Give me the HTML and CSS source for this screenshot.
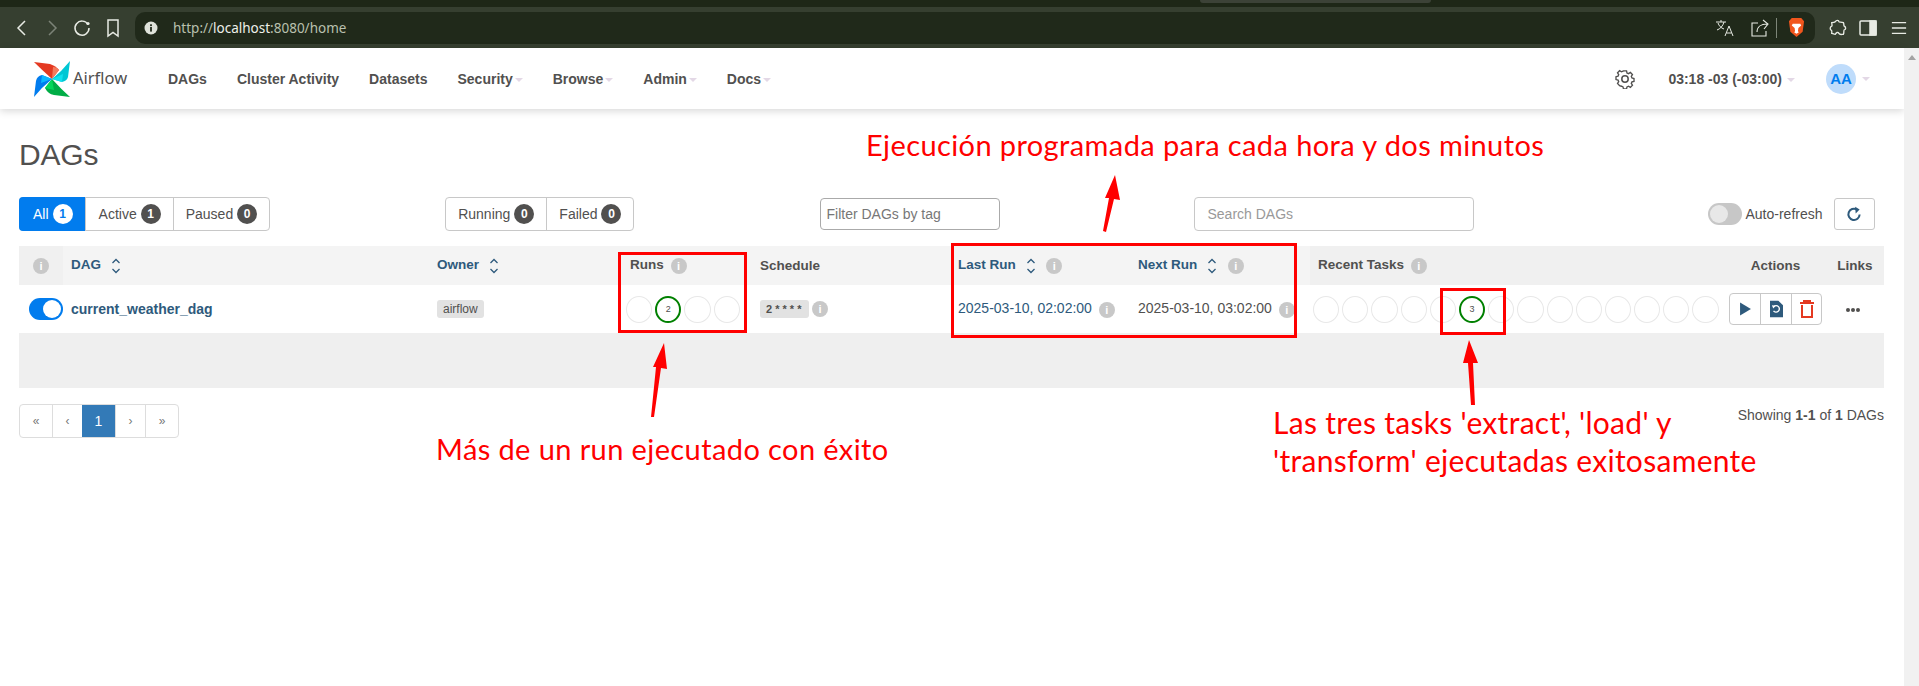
FILE: index.html
```html
<!DOCTYPE html>
<html lang="es">
<head>
    <meta charset="UTF-8">
    <title>DAGs - Airflow</title>
    <link rel="stylesheet" href="styles.css">
</head>
<body>
    <div class="tabstrip"><div class="tab-edge"></div></div>
    <div class="toolbar">
        <svg class="chrome-icon ic-back" viewBox="0 0 16 20"><path d="M11 3 4 10l7 7"/></svg>
        <svg class="chrome-icon ic-forward" viewBox="0 0 16 20"><path d="m5 3 7 7-7 7"/></svg>
        <svg class="chrome-icon ic-reload" viewBox="0 0 20 20"><path d="M16 6.500A7 7 0 1 0 17 10"/><circle cx="16" cy="5.500" r="1.600" fill="#e8ebe4" stroke="none"/></svg>
        <svg class="chrome-icon ic-bookmark" viewBox="0 0 16 20"><path d="M3 2h10v16l-5-3.500L3 18z"/></svg>
        <div class="urlbar">
            <svg class="url-info" viewBox="0 0 14 14"><circle cx="7" cy="7" r="6.500" fill="#dfe2da"/><rect x="6.100" y="6" width="1.800" height="4.600" fill="#20291a"/><rect x="6.100" y="3.300" width="1.800" height="1.800" fill="#20291a"/></svg>
            <span class="url-text">http://<b>localhost</b>:8080/home</span>
            <svg class="chrome-icon ic-translate" viewBox="0 0 20 20"><path d="M1 4h10M6 2v2M9 4c-1 4-4 7-7 8M3 5c1 3 3 5 6 6M10 18l4-10 4 10M11.500 15h5" stroke-width="1"/></svg>
            <svg class="chrome-icon ic-share" viewBox="0 0 20 20"><path d="M8 5H2v13h14v-5M7 14c0-5 4-8 10-8M13 2l5 4-4 5" stroke-width="1.100"/></svg>
            <span class="url-sep"></span>
            <svg class="brave" viewBox="0 0 18 22"><path d="M4 1h10l3 3.500-1.500 11L9 21l-6.500-5.500L1 4.500z" fill="#f1561d"/><path d="M5 7h8l1 2-3 2.500-.5 3.500 1 1L9 17.500 6.500 16l1-1-.5-3.500L4 9z" fill="#fff"/></svg>
        </div>
        <svg class="chrome-icon ic-puzzle" viewBox="0 0 20 20"><path d="M7 3c1-2 4-2 4 0 0 1 3 0 5 1 1 2 0 3 1 4 2 1 2 4 0 4-1 0 0 3-1 5-2 0-4 1-5-1-1-2-3-1-4 1-2 0-3-1-4-1 0-2 1-3-1-4-1-1-1-3 1-4 1-1 0-2 0-4 2 0 3 0 4-1z"/></svg>
        <svg class="chrome-icon ic-sidebar" viewBox="0 0 18 18"><rect x="1" y="2" width="16" height="14" rx="1"/><rect x="11" y="2" width="6" height="14" fill="#e8ebe4"/></svg>
        <svg class="chrome-icon ic-menu" viewBox="0 0 18 18"><path d="M1 3h16M1 9h16M1 15h16"/></svg>
    </div>

    <div class="window">
        <div class="page">
            <nav class="navbar">
                <a class="brand">
                    <svg class="brand-logo" viewBox="0 0 36 36">
                        <path d="M0 1 16 3Q22 5 25 9L18 18Q8 9 0 1Z" fill="#e43921"/>
                        <path d="M18 18 19 6Q23 6 25 9Z" fill="#f37a5d"/>
                        <path d="M36 0 34 16Q33 20 28 21L18 18Q28 10 36 0Z" fill="#00c7d4"/>
                        <path d="M18 18 29 13 28 21Z" fill="#11e1ee"/>
                        <path d="M36 36 20 34Q14 33 11 27L18 18Q27 28 36 36Z" fill="#00ad46"/>
                        <path d="M18 18 20 29 11 27Z" fill="#04d659"/>
                        <path d="M0 36 2 20Q3 15 8 14L18 18Q8 26 0 36Z" fill="#017cee"/>
                        <path d="M18 18 7 22 8 14Z" fill="#0cb6ff"/>
                    </svg>
                    <span class="brand-name">Airflow</span>
                </a>
                <ul class="nav-links">
                    <li>DAGs</li>
                    <li>Cluster Activity</li>
                    <li>Datasets</li>
                    <li class="has-caret">Security</li>
                    <li class="has-caret">Browse</li>
                    <li class="has-caret">Admin</li>
                    <li class="has-caret">Docs</li>
                </ul>
                <div class="nav-right">
                    <svg class="gear" viewBox="0 0 20 20"><path d="M8.300 1.500h3.400l.5 2.400 1.700.7 2.100-1.300 2.300 2.400-1.300 2 .7 1.700 2.300.6v3.200l-2.300.6-.7 1.700 1.300 2-2.300 2.400-2.100-1.300-1.700.7-.5 2.300H8.300l-.5-2.300-1.700-.7L4 17.900l-2.300-2.400 1.300-2-.7-1.700L0 11.200V8l2.300-.6.700-1.700-1.300-2L4 1.300l2.100 1.300 1.700-.7z" transform="translate(1 .5) scale(.9)"/><circle cx="10" cy="10" r="3.200"/></svg>
                    <span class="clock has-caret">03:18 -03 (-03:00)</span>
                    <span class="avatar">AA</span>
                    <span class="caret"></span>
                </div>
            </nav>

            <main class="content">
                <h1>DAGs</h1>
                <div class="controls">
                    <div class="btn-group">
                        <a class="btn active">All <span class="count">1</span></a>
                        <a class="btn">Active <span class="count">1</span></a>
                        <a class="btn">Paused <span class="count">0</span></a>
                    </div>
                    <div class="btn-group state-group">
                        <a class="btn">Running <span class="count">0</span></a>
                        <a class="btn">Failed <span class="count">0</span></a>
                    </div>
                    <div class="field tag-filter">Filter DAGs by tag</div>
                    <div class="field search">Search DAGs</div>
                    <div class="refresh">
                        <span class="switch off"></span>
                        <span class="refresh-label">Auto-refresh</span>
                        <a class="refresh-btn">
                            <svg viewBox="0 0 16 16"><path d="M13 8.500A5 5 0 1 1 10.500 4"/><path d="M9 1.500 13 4 9.500 7.500z" fill="#2e5a7c" stroke="none"/></svg>
                        </a>
                    </div>
                </div>

                <div class="table-wrap">
                    <table class="dags">
                        <colgroup>
                            <col class="c-toggle"><col class="c-dag"><col class="c-owner"><col class="c-runs"><col class="c-schedule">
                            <col class="c-date"><col class="c-date"><col class="c-tasks"><col class="c-actions"><col class="c-links">
                        </colgroup>
                        <thead>
                            <tr>
                                <th class="muted center"><span class="info">i</span></th>
                                <th class="link">DAG <svg class="sort" viewBox="0 0 10 16"><path d="M1.500 5 5 1.500 8.500 5M1.500 11 5 14.500 8.500 11"/></svg></th>
                                <th class="link">Owner <svg class="sort" viewBox="0 0 10 16"><path d="M1.500 5 5 1.500 8.500 5M1.500 11 5 14.500 8.500 11"/></svg></th>
                                <th>Runs <span class="info">i</span></th>
                                <th>Schedule</th>
                                <th class="link">Last Run <svg class="sort" viewBox="0 0 10 16"><path d="M1.500 5 5 1.500 8.500 5M1.500 11 5 14.500 8.500 11"/></svg> <span class="info wide">i</span></th>
                                <th class="link">Next Run <svg class="sort" viewBox="0 0 10 16"><path d="M1.500 5 5 1.500 8.500 5M1.500 11 5 14.500 8.500 11"/></svg> <span class="info wide">i</span></th>
                                <th class="muted">Recent Tasks <span class="info">i</span></th>
                                <th class="muted center">Actions</th>
                                <th class="muted center">Links</th>
                            </tr>
                        </thead>
                        <tbody>
                            <tr>
                                <td class="center"><span class="switch on"></span></td>
                                <td class="dag-name">current_weather_dag</td>
                                <td><span class="owner-tag">airflow</span></td>
                                <td class="circles-cell runs-cell">
                                    <div class="circles">
                                        <span></span><span class="ok">2</span><span></span><span></span>
                                    </div>
                                </td>
                                <td><span class="cron">2 * * * *</span><span class="info">i</span></td>
                                <td class="date link">2025-03-10, 02:02:00 <span class="info">i</span></td>
                                <td class="date">2025-03-10, 03:02:00 <span class="info">i</span></td>
                                <td class="circles-cell tasks-cell">
                                    <div class="circles">
                                        <span></span><span></span><span></span><span></span><span></span><span class="ok">3</span><span></span>
                                        <span></span><span></span><span></span><span></span><span></span><span></span><span></span>
                                    </div>
                                </td>
                                <td class="center">
                                    <div class="actions">
                                        <a><svg viewBox="0 0 12 14"><path d="M1 1v12l10-6z" fill="#2e5a7c"/></svg></a>
                                        <a><svg viewBox="0 0 14 18"><path d="M0 0h9l5 5v13H0z" fill="#2e5a7c"/><path d="M4 6.500A3.500 3.500 0 1 1 3.800 11" fill="none" stroke="#fff" stroke-width="1.500"/><path d="M2 5l4 .5-2.500 3z" fill="#fff"/></svg></a>
                                        <a><svg viewBox="0 0 14 18" class="trash"><path d="M0 3h14M4 3V1h6v2M2 5v12h10V5" fill="none" stroke="#e43921" stroke-width="2"/></svg></a>
                                    </div>
                                </td>
                                <td class="center dots"><i></i><i></i><i></i></td>
                            </tr>
                        </tbody>
                    </table>
                </div>

                <div class="table-foot">
                    <ul class="pager">
                        <li>«</li><li>‹</li><li class="current">1</li><li>›</li><li>»</li>
                    </ul>
                    <p class="showing">Showing <b>1-1</b> of <b>1</b> DAGs</p>
                </div>
            </main>
        </div>
        <div class="scrollbar"><span class="scroll-up"></span></div>
    </div>

    <!-- anotaciones en rojo sobre la captura -->
    <div class="box box-runs"></div>
    <div class="box box-dates"></div>
    <div class="box box-task"></div>
    <svg class="arrows" viewBox="0 0 1919 686">
        <polygon points="1115,175 1120,200 1114,199 1106,232 1103,231 1109,198 1105,198"/>
        <polygon points="664,343 667,369 661,368 654,417 651,417 656,367 653,367"/>
        <polygon points="1469,340 1478,363 1473,363 1475,405 1471,405 1468,363 1463,363"/>
    </svg>
    <p class="note note-dates">Ejecución programada para cada hora y dos minutos</p>
    <p class="note note-runs">Más de un run ejecutado con éxito</p>
    <p class="note note-tasks">Las tres tasks 'extract', 'load' y<br>'transform' ejecutadas exitosamente</p>
</body>
</html>
```

FILE: styles.css
```css
* {
    box-sizing: border-box;
}
html, body {
    height: 100%;
}
body {
    margin: 0;
    position: relative;
    overflow: hidden;
    display: flex;
    flex-direction: column;
    font-family: "Liberation Sans", Arial, sans-serif;
    font-size: 14px;
    color: #51504f;
    background: #fff;
}

/* browser chrome */
.tabstrip {
    height: 7px;
    background: #1e2717;
    flex: none;
}
.tab-edge {
    width: 231px;
    height: 3px;
    margin-left: 1200px;
    background: #3c4237;
    border-radius: 0 0 4px 4px;
}
.toolbar {
    height: 41px;
    flex: none;
    background: #363f30;
    display: flex;
    align-items: center;
    padding-left: 14px;
}
.chrome-icon {
    fill: none;
    stroke: #e8ebe4;
    stroke-width: 1.500;
    flex: none;
}
.ic-back {
    width: 16px;
    height: 20px;
}
.ic-forward {
    width: 16px;
    height: 20px;
    margin-left: 14px;
    stroke: #7c8377;
}
.ic-reload {
    width: 20px;
    height: 20px;
    margin-left: 12px;
}
.ic-bookmark {
    width: 16px;
    height: 20px;
    margin-left: 13px;
}
.urlbar {
    width: 1680px;
    height: 32px;
    margin-left: 14px;
    background: #20291a;
    border-radius: 10px;
    display: flex;
    align-items: center;
    padding-left: 9px;
    flex: none;
}
.url-info {
    width: 14px;
    height: 14px;
    flex: none;
}
.url-text {
    margin-left: 15px;
    font-family: "Noto Sans", sans-serif;
    font-size: 13.500px;
    color: #b9c0ae;
}
.url-text b {
    font-weight: 400;
    color: #eef0ea;
}
.ic-translate {
    width: 20px;
    height: 20px;
    margin-left: auto;
}
.ic-share {
    width: 20px;
    height: 20px;
    margin-left: 15px;
}
.url-sep {
    width: 1px;
    height: 20px;
    background: #7d8578;
    margin-left: 6px;
}
.brave {
    width: 17px;
    height: 21px;
    margin: 0 10px 0 11px;
}
.ic-puzzle {
    width: 18px;
    height: 18px;
    margin-left: 14px;
}
.ic-sidebar {
    width: 18px;
    height: 18px;
    margin-left: 12px;
}
.ic-menu {
    width: 16px;
    height: 16px;
    margin-left: 14px;
}

.window {
    flex: 1;
    min-height: 0;
    display: flex;
}
.page {
    flex: 1;
    min-width: 0;
}
.scrollbar {
    width: 15px;
    background: #f1f1f1;
    display: flex;
    justify-content: center;
    padding-top: 7px;
}
.scroll-up {
    width: 0;
    height: 0;
    border-left: 4px solid transparent;
    border-right: 4px solid transparent;
    border-bottom: 5px solid #a3a3a3;
}

/* navbar */
.navbar {
    height: 61px;
    display: flex;
    align-items: center;
    padding-left: 34px;
    background: #fff;
    box-shadow: 0 2px 8px rgba(0, 0, 0, 0.16);
}
.brand {
    display: flex;
    align-items: center;
    width: 134px;
}
.brand-logo {
    width: 36px;
    height: 36px;
    flex: none;
}
.brand-name {
    margin-left: 3px;
    margin-top: -2px;
    font-family: "Noto Sans", sans-serif;
    font-size: 16.500px;
    color: #51504f;
}
.nav-links {
    list-style: none;
    display: flex;
    gap: 30px;
    margin: 0;
    padding: 0;
    font-weight: 700;
    font-size: 14px;
}
.has-caret::after, .caret {
    content: "";
    display: inline-block;
    width: 0;
    height: 0;
    margin-left: 2px;
    border-left: 4px solid transparent;
    border-right: 4px solid transparent;
    border-top: 4px solid #e3d8e6;
    vertical-align: middle;
}
.nav-right {
    margin-left: auto;
    display: flex;
    align-items: center;
    padding-right: 34px;
    font-weight: 700;
    font-size: 14px;
}
.gear {
    width: 20px;
    height: 20px;
    fill: none;
    stroke: #51504f;
    stroke-width: 1.500;
    margin-right: 33px;
}
.clock::after {
    margin-left: 5px;
}
.avatar {
    width: 30px;
    height: 30px;
    margin-left: 31px;
    border-radius: 50%;
    background: #bfdcfb;
    color: #017cee;
    font-size: 15px;
    display: flex;
    align-items: center;
    justify-content: center;
}
.caret {
    margin-left: 6px;
}

/* page content */
.content {
    padding: 0 20px 0 19px;
}
h1 {
    margin: 0;
    padding-top: 29px;
    font-size: 30px;
    font-weight: 400;
    line-height: 33px;
    letter-spacing: -0.200px;
}
.controls {
    display: flex;
    align-items: center;
    margin-top: 26px;
}
.btn-group {
    display: flex;
    height: 34px;
    border: 1px solid #c8c8c8;
    border-radius: 4px;
    flex: none;
}
.btn {
    display: flex;
    align-items: center;
    gap: 4px;
    padding: 0 12px;
    border-left: 1px solid #c8c8c8;
    color: #51504f;
}
.btn:first-child {
    border-left: none;
}
.btn.active {
    background: #017cee;
    color: #fff;
    margin: -1px 0 -1px -1px;
    border-radius: 4px 0 0 4px;
    padding: 0 12px 0 14px;
}
.btn.active + .btn {
    padding-left: 13px;
}
.count {
    min-width: 20px;
    height: 20px;
    border-radius: 10px;
    background: #51504f;
    color: #fff;
    font-size: 12px;
    font-weight: 700;
    display: flex;
    align-items: center;
    justify-content: center;
}
.btn.active .count {
    background: #fff;
    color: #017cee;
}
.state-group {
    margin-left: 175px;
}
.field {
    height: 32px;
    border: 1px solid #aaa;
    border-radius: 4px;
    display: flex;
    align-items: center;
    color: #777;
    flex: none;
}
.tag-filter {
    width: 180px;
    margin-left: 186px;
    padding-left: 5px;
}
.search {
    width: 280px;
    height: 34px;
    margin-left: 194px;
    padding-left: 12px;
    border-color: #c8c8c8;
    color: #999;
}
.refresh {
    display: flex;
    align-items: center;
    margin-left: 234px;
}
.switch {
    display: inline-block;
    width: 34px;
    height: 22px;
    border-radius: 11px;
    position: relative;
    vertical-align: middle;
}
.switch::after {
    content: "";
    position: absolute;
    top: 2px;
    width: 18px;
    height: 18px;
    border-radius: 50%;
}
.switch.off {
    background: #c7c7c7;
}
.switch.off::after {
    left: 2px;
    background: #e8e8e8;
}
.switch.on {
    background: #017cee;
}
.switch.on::after {
    right: 2px;
    background: #fff;
}
.refresh-label {
    margin-left: 3px;
}
.refresh-btn {
    width: 41px;
    height: 32px;
    margin-left: 11px;
    border: 1px solid #c8c8c8;
    border-radius: 3px;
    display: flex;
    align-items: center;
    justify-content: center;
}
.refresh-btn svg {
    width: 18px;
    height: 18px;
    fill: none;
    stroke: #2e5a7c;
    stroke-width: 1.800;
}

/* table */
.table-wrap {
    margin-top: 15px;
    height: 142px;
    background: #efefef;
    border-radius: 4px 4px 0 0;
}
.dags {
    width: 1865px;
    table-layout: fixed;
    border-collapse: collapse;
}
.c-toggle { width: 44px; }
.c-dag { width: 366px; }
.c-owner { width: 193px; }
.c-runs { width: 130px; }
.c-schedule { width: 198px; }
.c-date { width: 180px; }
.c-tasks { width: 415px; }
.c-actions { width: 101px; }
.c-links { width: 58px; }
th {
    height: 39px;
    padding: 0 8px;
    text-align: left;
    font-size: 13.500px;
    background: #f4f4f4;
}
th.muted {
    background: #f0f0f0;
}
th.link, td.link {
    color: #2e5a7c;
}
td {
    height: 48px;
    padding: 0 8px;
    background: #fff;
    white-space: nowrap;
}
.center {
    text-align: center;
    padding: 0;
}
td.center:first-child {
    padding-left: 10px;
}
.info {
    display: inline-block;
    width: 16px;
    height: 16px;
    border-radius: 50%;
    background: #c8c8c8;
    color: #fff;
    font-size: 11px;
    font-weight: 700;
    line-height: 16px;
    text-align: center;
    vertical-align: middle;
    margin-left: 3px;
}
.info.wide {
    margin-left: 7px;
}
th.center .info {
    margin: 0;
}
.sort {
    width: 10px;
    height: 16px;
    margin-left: 6px;
    fill: none;
    stroke: #2e5a7c;
    stroke-width: 1.300;
    vertical-align: middle;
}
.dag-name {
    font-weight: 700;
    color: #2e5a7c;
}
.owner-tag, .cron {
    display: inline-block;
    height: 18px;
    line-height: 18px;
    padding: 0 6px;
    border-radius: 3px;
    background: #e2e2e2;
    font-size: 12px;
}
.cron {
    font-weight: 700;
    font-size: 11px;
    width: 49px;
    white-space: nowrap;
}
.date {
    font-size: 14px;
}
.circles-cell {
    padding: 0 0 0 4px;
}
.tasks-cell {
    padding-left: 3px;
}
.circles {
    display: flex;
    gap: 3px;
}
.circles span {
    width: 26.200px;
    height: 27px;
    flex: none;
    border: 1px solid #e8e8e8;
    border-radius: 50%;
    font-size: 9px;
    display: flex;
    align-items: center;
    justify-content: center;
}
.circles .ok {
    border: 2px solid #008000;
}
.actions {
    display: inline-flex;
    height: 32px;
    border: 1px solid #c8c8c8;
    border-radius: 4px;
    vertical-align: middle;
}
.actions a {
    width: 30.500px;
    display: flex;
    align-items: center;
    justify-content: center;
    border-left: 1px solid #c8c8c8;
}
.actions a:first-child {
    border-left: none;
}
.actions svg {
    width: 13px;
    height: 18px;
}
.actions .trash {
    width: 14px;
}
.dots {
    padding-right: 4px;
}
.dots i {
    display: inline-block;
    width: 4px;
    height: 4px;
    margin: 0 .5px;
    border-radius: 50%;
    background: #51504f;
    vertical-align: middle;
}

/* pagination */
.table-foot {
    display: flex;
    justify-content: space-between;
    margin-top: 16px;
}
.pager {
    list-style: none;
    display: flex;
    height: 34px;
    margin: 0;
    padding: 0;
    border: 1px solid #ddd;
    border-radius: 4px;
    color: #777;
}
.pager li {
    width: 30px;
    display: flex;
    align-items: center;
    justify-content: center;
    border-left: 1px solid #ddd;
    font-size: 12px;
}
.pager li:first-child {
    width: 32px;
    border-left: none;
}
.pager li:last-child {
    width: 33px;
}
.pager .current {
    width: 33px;
    background: #337ab7;
    color: #fff;
    border-left: none;
    font-size: 14px;
}
.showing {
    margin: 3px 0 0;
    font-size: 14px;
}

/* annotations */
.box {
    position: absolute;
    border: 3px solid #f00;
}
.box-runs {
    left: 618px;
    top: 252px;
    width: 129px;
    height: 81px;
}
.box-dates {
    left: 951px;
    top: 243px;
    width: 346px;
    height: 95px;
}
.box-task {
    left: 1440px;
    top: 288px;
    width: 66px;
    height: 47px;
}
.arrows {
    position: absolute;
    left: 0;
    top: 0;
    width: 1919px;
    height: 686px;
    fill: #f00;
    pointer-events: none;
}
.note {
    position: absolute;
    margin: 0;
    color: #f00;
    font-family: Lato, "Open Sans", sans-serif;
    font-size: 29px;
    letter-spacing: 0.400px;
    line-height: 38px;
    white-space: nowrap;
}
.note-dates {
    left: 866px;
    top: 126px;
}
.note-runs {
    left: 436px;
    top: 430px;
}
.note-tasks {
    left: 1273px;
    top: 403px;
    font-size: 30px;
    letter-spacing: 0.300px;
}
```
